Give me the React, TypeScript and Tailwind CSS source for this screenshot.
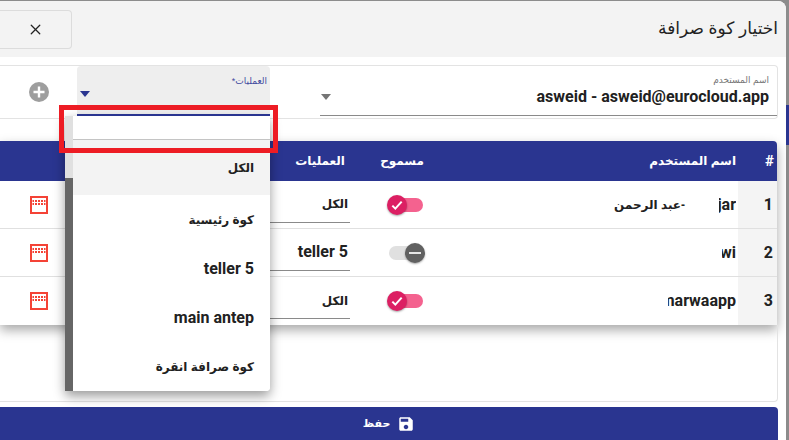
import { X } from "lucide-react";

const arabic = "font-['Liberation_Sans','DejaVu_Sans','Noto_Sans',sans-serif]";
const latin = "font-['Roboto','Liberation_Sans','DejaVu_Sans',sans-serif]";

const rows = [
  { id: 1, name: "jar", nameWidth: "w-[17px]", extra: "-عبد الرحمن", on: true, op: "الكل", opBold: false },
  { id: 2, name: "wi", nameWidth: "w-[14px]", extra: "", on: false, op: "teller 5", opBold: true },
  { id: 3, name: "marwaapp", nameWidth: "w-[68px]", extra: "", on: true, op: "الكل", opBold: false },
];

const options = [
  { label: "الكل", bold: false, active: true },
  { label: "كوة رئيسية", bold: false, active: false },
  { label: "teller 5", bold: true, active: false },
  { label: "main antep", bold: true, active: false },
  { label: "كوة صرافة انقرة", bold: false, active: false },
];

function Toggle({ on }: { on: boolean }) {
  return (
    <div className={`relative h-[14px] w-[34px] rounded-full ${on ? "bg-[#f4628f]" : "bg-[#e0e0e0]"}`}>
      <div
        className={`absolute top-[-3px] flex h-5 w-5 items-center justify-center rounded-full shadow-[0_1px_2px_rgba(0,0,0,0.35)] ${
          on ? "left-[-2px] bg-[#dc1f63]" : "right-[-2px] bg-[#616161]"
        }`}
      >
        {on ? (
          <svg viewBox="0 0 24 24" className="h-4 w-4" fill="none" stroke="#fff" strokeWidth="3">
            <path d="M5 13l4.5 4.5L19 7" />
          </svg>
        ) : (
          <div className="h-[2px] w-3 bg-[#e6e6e6]" />
        )}
      </div>
    </div>
  );
}

function GridIcon() {
  return (
    <svg viewBox="0 0 18 18" className="h-[18px] w-[18px]">
      <rect x="1" y="1" width="16" height="16" fill="#fff" stroke="#f44336" strokeWidth="2" />
      {[5, 8, 11].map((x) => (
        <g key={x} fill="#f44336">
          <rect x={x} y="4" width="2" height="2" />
          <rect x={x} y="7" width="2" height="2" />
        </g>
      ))}
      <rect x="14" y="4" width="1.5" height="2" fill="#f44336" />
      <rect x="14" y="7" width="1.5" height="2" fill="#f44336" />
      <rect x="2.5" y="4" width="1.5" height="2" fill="#f44336" />
      <rect x="2.5" y="7" width="1.5" height="2" fill="#f44336" />
    </svg>
  );
}

function Dropdown() {
  return (
    <div className="absolute left-[65px] top-[116px] flex h-[275px] w-[205px] rounded-b shadow-[0_5px_12px_rgba(0,0,0,0.4)]">
      <div className="flex w-2 flex-col bg-[#e0e0e0]">
        <div className="h-[62px]" />
        <div className="flex-1 bg-[#666666]" />
      </div>
      <div className="flex flex-1 flex-col rounded-br bg-white" dir="rtl">
        <div className="h-[29px] border-b border-[#c4c4c4] bg-white" />
        <div className="flex flex-1 flex-col">
          {options.map((o) => (
            <div
              key={o.label}
              className={`flex h-[49px] items-center pr-4 text-[#212121] ${o.active ? "h-[55px] bg-[#f3f3f3]" : ""} ${
                o.bold ? `${latin} text-[16px] font-bold` : `${arabic} text-[12px] font-bold`
              }`}
            >
              {o.label}
            </div>
          ))}
        </div>
      </div>
    </div>
  );
}

export default function App() {
  return (
    <div className="relative h-[440px] w-[789px] overflow-hidden bg-[#8c8c8c]">
      <div className="absolute right-0 top-[105px] h-10 w-[3px] bg-[#2a3590]" />
      <div className="mr-[3px] mt-px flex h-[439px] flex-col rounded-tr-lg bg-white">
        {/* header */}
        <div className="flex h-14 shrink-0 items-center justify-between rounded-tr-lg bg-[#f3f3f3] pr-[8px]">
          <button className="flex h-[39px] w-[72px] items-center justify-center rounded-r border border-l-0 border-[#dcdcdc] pl-0 text-[#222]">
            <X size={17} strokeWidth={1.8} />
          </button>
          <h1 className={`${arabic} text-[17px] text-[#222]`} dir="rtl">
            اختيار كوة صرافة
          </h1>
        </div>

        <div className="flex flex-1 flex-col pr-2 pt-2">
          {/* select row */}
          <div className="flex h-[54px] shrink-0 items-start rounded-r border border-l-0 border-[#e3e3e3]">
            <div className="flex h-full w-[77px] items-center justify-center pl-[1px]">
              <svg viewBox="0 0 20 20" className="h-5 w-5">
                <circle cx="10" cy="10" r="10" fill="#9e9e9e" />
                <path d="M10 4.5v11M4.5 10h11" stroke="#fff" strokeWidth="2.4" />
              </svg>
            </div>
            <div className="flex h-[50px] w-[193px] flex-col rounded-t bg-[#eeeeee]" />
            <div className="ml-[50px] flex h-[50px] flex-1 flex-col border-b border-[#8a8a8a] pr-[8px]" dir="rtl">
              <div className={`${arabic} mt-[7px] text-[9px] leading-[14px] text-[#777]`}>اسم المستخدم</div>
              <div className="flex items-center justify-between">
                <span className={`${latin} text-[16px] font-bold leading-[20px] text-[#212121]`} dir="ltr">
                  asweid - asweid@eurocloud.app
                </span>
                <span className="ml-[1px] h-0 w-0 border-x-[5px] border-t-[6px] border-x-transparent border-t-[#757575]" />
              </div>
            </div>
          </div>

          {/* table */}
          <div className="mr-px mt-[22px] shrink-0 rounded-tr shadow-[0_5px_12px_rgba(0,0,0,0.35)]" dir="rtl">
            <div className={`grid h-10 grid-cols-[39px_308px_80px_1fr_77px] items-center rounded-tr bg-[#2a3590] font-bold text-white ${arabic} text-[12px]`}>
              <div className={`${latin} pr-[3px] text-[15px]`}>#</div>
              <div className="pr-[2px]">اسم المستخدم</div>
              <div className="pr-[6px]">مسموح</div>
              <div className="pr-[5px]">العمليات</div>
              <div />
            </div>
            {rows.map((r) => (
              <div
                key={r.id}
                className="grid h-12 grid-cols-[39px_308px_80px_1fr_77px] items-center border-b border-[#e0e0e0] bg-white last:border-b-0"
              >
                <div className={`${latin} flex h-full items-center bg-[#f4f4f4] pr-[4px] text-[16px] font-bold text-[#212121]`}>{r.id}</div>
                <div className="flex items-center pr-[2px]">
                  <div className={`${r.nameWidth} flex shrink-0 justify-start overflow-hidden`} dir="rtl">
                    <span className={`${latin} text-[16px] font-bold text-[#212121]`} dir="ltr">
                      {r.name}
                    </span>
                  </div>
                  {r.extra && <span className={`${arabic} mr-[34px] text-[12px] font-bold text-[#212121]`}>{r.extra}</span>}
                </div>
                <div className="flex justify-start pr-[7px]" dir="rtl">
                  <div dir="ltr">
                    <Toggle on={r.on} />
                  </div>
                </div>
                <div className="flex h-[36px] items-center border-b border-[#8a8a8a] pr-[2px]">
                  <span className={r.opBold ? `${latin} text-[16px] font-bold text-[#212121]` : `${arabic} text-[12px] font-bold text-[#212121]`}>{r.op}</span>
                </div>
                <div className="flex justify-center pl-[1px]">
                  <GridIcon />
                </div>
              </div>
            ))}
          </div>

          {/* empty area + save */}
          <div className="flex-1 rounded-br border-b border-r border-[#e3e3e3]" />
          <button className={`mt-[5px] flex h-[33px] shrink-0 items-center justify-center gap-[7px] rounded-tr bg-[#2a3590] text-white ${arabic} text-[11px] font-bold`} dir="rtl">
            <svg viewBox="0 0 24 24" className="h-[18px] w-[18px]" fill="#fff">
              <path d="M17 3H5c-1.11 0-2 .9-2 2v14c0 1.1.89 2 2 2h14c1.1 0 2-.9 2-2V7l-4-4zm-5 16c-1.66 0-3-1.34-3-3s1.34-3 3-3 3 1.34 3 3-1.34 3-3 3zm3-10H5V5h10v4z" />
            </svg>
            حفظ
          </button>
        </div>
      </div>

      {/* open select overlay */}
      <Dropdown />
      <div className="absolute left-[77px] top-[66px] flex h-[50px] w-[193px] flex-col rounded-t border-b-2 border-[#2a3590] px-[3px]" dir="rtl">
        <div className={`${arabic} mt-[8px] text-[9px] leading-[14px] text-[#3f4aa0]`}>العمليات*</div>
        <span className="absolute bottom-[17px] left-[3px] h-0 w-0 border-x-[5px] border-t-[6px] border-x-transparent border-t-[#2a3590]" />
      </div>

      {/* red annotation box */}
      <div className="absolute left-[59px] top-[105px] h-[48px] w-[219px] border-[5px] border-[#ed1c24]" />
    </div>
  );
}
